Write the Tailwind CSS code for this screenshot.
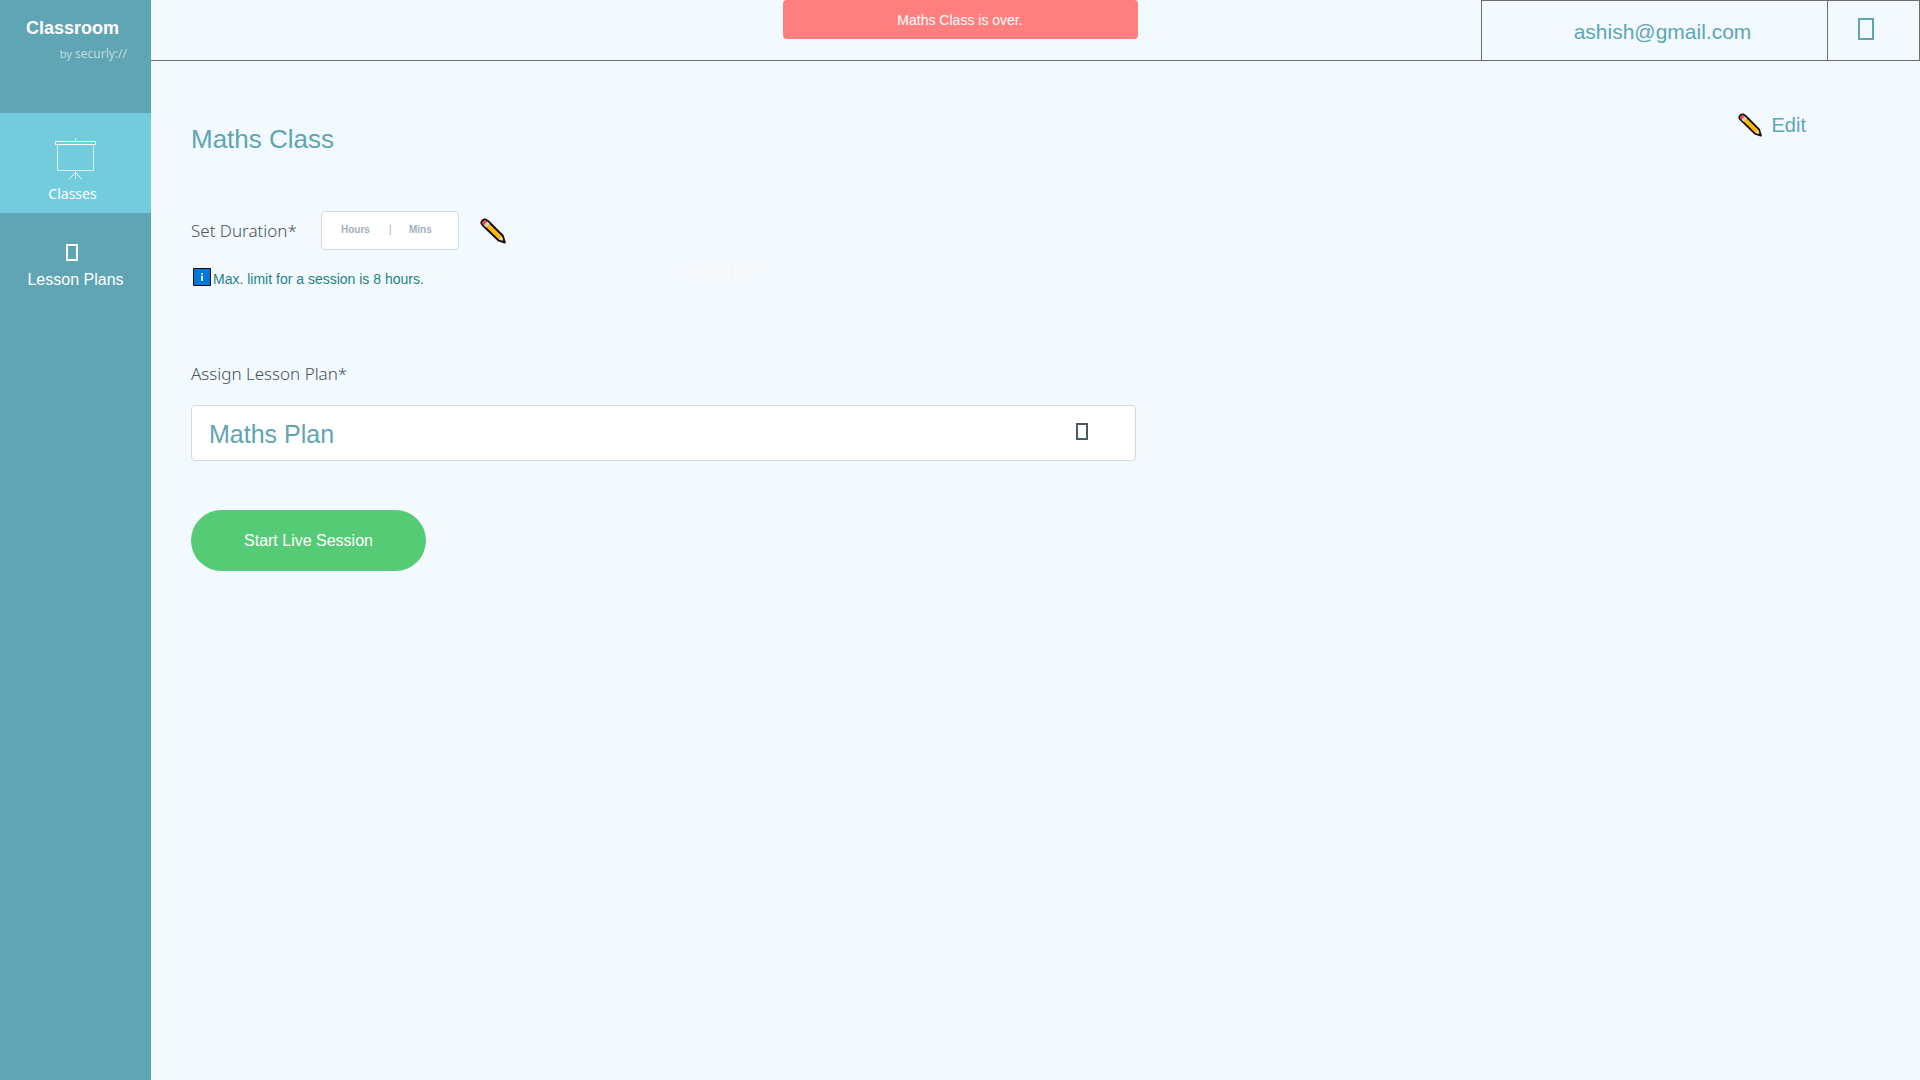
<!DOCTYPE html>
<html lang="en">
<head>
<meta charset="utf-8">
<meta name="viewport" content="width=device-width, initial-scale=1">
<title>Classroom</title>
<script src="https://cdn.jsdelivr.net/npm/@tailwindcss/browser@4"></script>
</head>
<body class="relative flex min-h-screen bg-[#f2f9ff] font-['Liberation_Sans',Arial,sans-serif] text-[#60a5b4]">

<svg class="hidden" aria-hidden="true">
  <symbol id="pencil" viewBox="0 0 26 26">
    <path d="M1.500 5.500C1 3.500 3.500 1 5.500 1.500L8 3L22.800 17.800L24.800 24.500L18.300 22.300L3 7.500Z" fill="#ffb900" stroke="#111" stroke-width="2" stroke-linejoin="round"/>
    <path d="M2.300 5.400C2.200 3.800 4 2.100 5.600 2.300L7.400 3.600L3.800 7.200Z" fill="#e74856"/>
    <path d="M7.400 3.700L9.800 6L6.200 9.500L3.800 7.200Z" fill="#ccc"/>
    <path d="M21.800 18.300L23 21.500L21.500 22.600L18.900 21.400Z" fill="#f7d7c4"/>
  </symbol>
</svg>

<aside class="w-[151px] shrink-0 bg-[#60a5b4] text-white">
  <div class="h-[113px] pt-[17px]">
    <p class="pl-[26px] text-lg leading-[22px] font-bold">Classroom</p>
    <p class="pt-1 pr-6 text-right font-['Noto_Sans',sans-serif] text-xs leading-[22px] text-white/60"><span class="text-[11px]">by</span> securly://</p>
  </div>
  <nav>
    <a href="#" class="flex h-[100px] flex-col items-center bg-[#73ccde] pt-[25px] pr-[2px]">
      <svg class="h-[42px] w-[42px]" viewBox="0 0 42 42" fill="none" stroke="#fff" aria-hidden="true">
        <path d="M21.500 0V3M1.500 3.500H41.500V6.500H1.500Z"/>
        <path d="M3.500 7V32.500H39.500V7" stroke-opacity=".7"/>
        <path d="M21.500 33V41M21 35L15 41.500M22 35L28 41.500" stroke-opacity=".85"/>
      </svg>
      <span class="pt-[2px] pr-1 font-['Noto_Sans',sans-serif] text-sm leading-6">Classes</span>
    </a>
    <a href="#" class="flex flex-col items-center pt-[31px]">
      <span class="mr-2 h-[17px] w-3 border-2 border-white"></span>
      <span class="pt-[7px] text-base leading-6">Lesson Plans</span>
    </a>
  </nav>
</aside>

<div class="min-w-0 flex-1">
  <header class="flex h-[61px] justify-end border-b border-[#6b6b70]">
    <div class="flex w-[346px] items-center justify-center border-t border-l border-[#6b6b70] pt-[2px] pl-4 text-[21px]">ashish@gmail.com</div>
    <button type="button" aria-label="Account menu" class="flex w-[93px] items-start border-x border-t border-[#6b6b70] pt-[17px] pl-[30px]">
      <span class="h-[22px] w-4 border-2 border-[#60a5b4]"></span>
    </button>
  </header>

  <main class="pl-10">
    <div class="flex justify-between pt-[50px] pr-[114px]">
      <h1 class="pt-3 text-[26px] leading-8">Maths Class</h1>
      <button type="button" class="flex h-7 items-center gap-[10px] text-xl"><svg class="h-6 w-6" aria-hidden="true"><use href="#pencil"/></svg>Edit</button>
    </div>

    <form>
      <div class="flex items-center pt-14">
        <label for="hours" class="w-[130px] font-['Noto_Sans',sans-serif] text-[17px] leading-6 font-light text-[#44545c]">Set Duration*</label>
        <div class="flex h-[39px] w-[138px] items-center rounded border border-[#d5d9de] bg-white pr-4 pb-[2px] pl-[19px] text-[10px] font-bold text-[#9fb2bd]">
          <input id="hours" type="text" placeholder="Hours" class="w-12 outline-none placeholder:text-[#9fb2bd]">
          <span class="w-5 font-normal">|</span>
          <input type="text" aria-label="Minutes" placeholder="Mins" class="w-8 outline-none placeholder:text-[#9fb2bd]">
        </div>
        <button type="button" aria-label="Edit duration" class="ml-[21px]"><svg class="h-[26px] w-[26px]" aria-hidden="true"><use href="#pencil"/></svg></button>
      </div>
      <p class="flex items-center gap-[2px] pt-[15px] pl-[2px] text-sm text-[#1e8580]">
        <svg class="h-[18px] w-[18px]" viewBox="0 0 18 18" aria-hidden="true"><path d="M.5.5H17.500V17.500H.5Z" fill="#0078d7" stroke="#111"/><path d="M9 5V6.500M9 7.500V13" stroke="#cfe6fa" stroke-width="2"/></svg>
        <span class="pt-1">Max. limit for a session is 8 hours.</span>
      </p>

      <label for="plan" class="mt-[73px] block font-['Noto_Sans',sans-serif] text-[17px] leading-6 font-light text-[#44545c]">Assign Lesson Plan*</label>
      <div class="mt-[19px] flex max-w-[945px] items-center rounded border border-[#d5d9de] bg-white pr-[47px]">
        <select id="plan" class="h-[54px] flex-1 appearance-none bg-transparent pt-1 pl-[17px] text-[25px] outline-none"><option>Maths Plan</option></select>
        <span class="mb-1 h-[17px] w-3 border-2 border-[#4b5a63]"></span>
      </div>

      <button type="submit" class="mt-[49px] h-[61px] w-[235px] rounded-full bg-[#55cb75] text-base text-white">Start Live Session</button>
    </form>
  </main>
</div>

<p class="absolute top-[254px] left-[681px] text-[25px] leading-8 text-[#fafafa]">English</p>
<div role="alert" class="absolute inset-x-0 top-0 mx-auto h-[39px] w-[355px] rounded bg-[#ff7f7e] text-center text-sm leading-[40px] text-white">Maths Class is over.</div>
</body>
</html>
